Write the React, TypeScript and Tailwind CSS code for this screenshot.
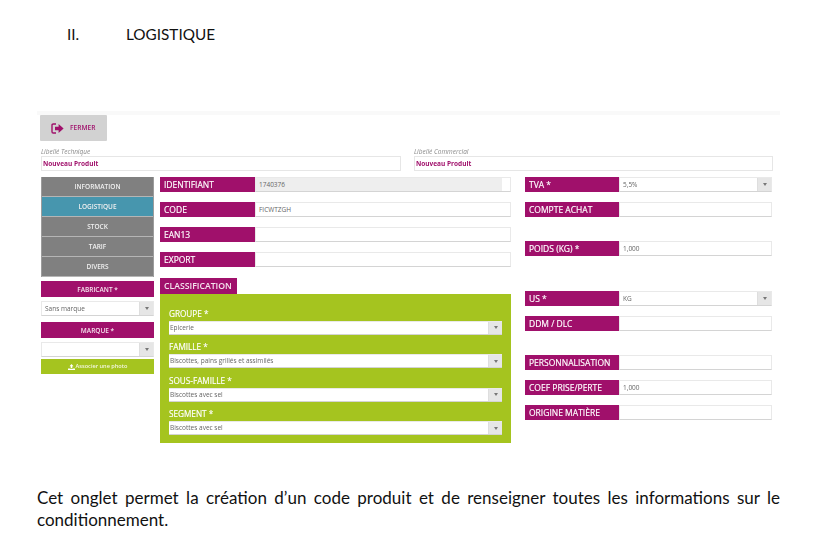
import React from "react";

const Arrow = () => (
  <div className="w-[14px] h-full border-l border-[#dedede] bg-[#e6e6e6] flex items-center justify-center shrink-0">
    <div className="w-0 h-0 border-l-[2.5px] border-r-[2.5px] border-t-[3px] border-l-transparent border-r-transparent border-t-[#777]" />
  </div>
);

const Field = ({ label, value, mt = "", grey = false, select = false, w = "w-[95px]" }: { label: string; value?: string; mt?: string; grey?: boolean; select?: boolean; w?: string }) => (
  <div className={`flex h-[15px] ${mt}`}>
    <div className={`${w} shrink-0 bg-[#a0106b] text-white text-[8.5px] font-normal [-webkit-text-stroke:0.15px_white] pl-[4px] pt-[2px] flex items-center`}>{label}</div>
    <div className="flex-1 flex items-center border border-[#e9e9e9] border-b-[#d4d4d4] bg-white text-[6.5px] text-[#666] relative">
      {grey ? <div className="absolute left-0 top-0 bottom-0 right-[8px] bg-[#eeeeee]" /> : null}
      <span className="relative flex-1 pl-[3px]">{value}</span>
      {select ? <Arrow /> : null}
    </div>
  </div>
);

const Tab = ({ label, active = false }: { label: string; active?: boolean }) => (
  <div className={`h-[20px] pt-[1px] flex items-center justify-center border-b border-[#b5b5b5] text-[#f0f0f0] text-[6.5px] font-semibold ${active ? "bg-[#4796ae]" : "bg-[#808080]"}`}>{label}</div>
);

const Bar = ({ label, mt = "" }: { label: string; mt?: string }) => (
  <div className={`h-[16px] pt-[1px] bg-[#a0106b] text-[#f4e4ee] text-[6.5px] font-semibold flex items-center justify-center ${mt}`}>{label}</div>
);

const Sel = ({ value, mt = "" }: { value: string; mt?: string }) => (
  <div className={`h-[15px] flex items-center bg-white border border-[#e9e9e9] border-b-[#d4d4d4] text-[6.5px] text-[#666] ${mt}`}>
    <span className="flex-1 pl-[3px]">{value}</span>
    <Arrow />
  </div>
);

const Group = ({ label, value }: { label: string; value: string }) => (
  <div className="h-[33.5px] flex flex-col justify-end">
    <div className="text-white text-[8.2px] font-normal [-webkit-text-stroke:0.15px_white] leading-[12px] mb-[1px]">{label}</div>
    <div className="h-[14px] flex items-center bg-white border-b border-t border-[#d4d4d4] border-t-[#e9e9e9] text-[6.5px] text-[#666]">
      <span className="flex-1 pl-[1px]">{value}</span>
      <Arrow />
    </div>
  </div>
);

export default function App() {
  return (
    <div className="w-[825px] h-[560px] bg-white overflow-hidden text-black" style={{ fontFamily: "Lato, sans-serif" }}>
      <div className="h-[111px] pt-[24px] pl-[67px] flex text-[15.3px] leading-[20px] text-[#111]">
        <span className="w-[59px]">II.</span>
        <span>LOGISTIQUE</span>
      </div>

      <div className="ml-[37px] w-[743px] h-[342px] blur-[0.35px]" style={{ fontFamily: '"Open Sans", sans-serif' }}>
        <div className="h-[4px] bg-[#f9f9f9]" />
        <div className="pl-[3px]">
          <div className="w-[67px] h-[26px] bg-[#d2d2d2] rounded-[1px] flex items-center pl-[11px] gap-[6px]">
            <svg width="13" height="11" viewBox="0 0 13 11" fill="none">
              <path d="M5 1H2.2C1.5 1 1 1.5 1 2.2v6.6C1 9.5 1.5 10 2.2 10H5" stroke="#a0106b" strokeWidth="1.4" />
              <path d="M4 3.8h3.6V1l5 4.5-5 4.5V7.2H4z" fill="#a0106b" />
            </svg>
            <span className="text-[6.6px] font-semibold text-[#a0106b]">FERMER</span>
          </div>
        </div>

        <div className="flex pl-[4px] pt-[6px] h-[36px]">
          <div className="w-[360px]">
            <div className="text-[6.5px] italic text-[#8a8a8a] leading-[9px]">Libellé Technique</div>
            <div className="h-[15px] border border-[#e6e6e6] flex items-center pl-[1px] text-[6.5px] font-bold text-[#a0106b]">Nouveau Produit</div>
          </div>
          <div className="w-[359px] ml-[13px]">
            <div className="text-[6.5px] italic text-[#8a8a8a] leading-[9px]">Libellé Commercial</div>
            <div className="h-[15px] border border-[#e6e6e6] flex items-center pl-[1px] text-[6.5px] font-bold text-[#a0106b]">Nouveau Produit</div>
          </div>
        </div>

        <div className="flex pl-[4px]">
          <div className="w-[113px]">
            <div className="border border-[#9c9c9c] border-y-0">
              <Tab label="INFORMATION" />
              <Tab label="LOGISTIQUE" active />
              <Tab label="STOCK" />
              <Tab label="TARIF" />
              <Tab label="DIVERS" />
            </div>
            <Bar label="FABRICANT *" mt="mt-[4px]" />
            <Sel value="Sans marque" mt="mt-[4px]" />
            <Bar label="MARQUE *" mt="mt-[6px]" />
            <Sel value="" mt="mt-[4px]" />
            <div className="mt-[2px] h-[15px] bg-[#a5c41f] text-[#f3f7e0] text-[5.6px] font-semibold flex items-center justify-center gap-[1px]">
              <svg width="7" height="6" viewBox="0 0 7 6" fill="#fff">
                <path d="M3.5 0 5.5 2.2H4.3V4H2.7V2.2H1.5zM0 4.4h2v.4h3v-.4h2V6H0z" />
              </svg>
              Associer une photo
            </div>
          </div>

          <div className="w-[351px] ml-[6px]">
            <Field label="IDENTIFIANT" value="1740376" grey />
            <Field label="CODE" value="FICWTZGH" mt="mt-[10px]" />
            <Field label="EAN13" mt="mt-[10px]" />
            <Field label="EXPORT" mt="mt-[10px]" />
            <div className="mt-[11px] w-[77px] h-[16px] pt-[1px] bg-[#a0106b] text-[#f4e4ee] text-[8.7px] font-semibold flex items-center pl-[4px]">CLASSIFICATION</div>
            <div className="h-[149px] bg-[#a5c41f] px-[9px] pt-[7px]">
              <Group label="GROUPE *" value="Epicerie" />
              <Group label="FAMILLE *" value="Biscottes, pains grillés et assimilés" />
              <Group label="SOUS-FAMILLE *" value="Biscottes avec sel" />
              <Group label="SEGMENT *" value="Biscottes avec sel" />
            </div>
          </div>

          <div className="w-[247px] ml-[14px]">
            <Field label="TVA *" value="5,5%" select w="w-[94px]" />
            <Field label="COMPTE ACHAT" mt="mt-[10px]" w="w-[94px]" />
            <Field label="POIDS (KG) *" value="1,000" mt="mt-[24px]" w="w-[94px]" />
            <Field label="US *" value="KG" select mt="mt-[35px]" w="w-[94px]" />
            <Field label="DDM / DLC" mt="mt-[10px]" w="w-[94px]" />
            <Field label="PERSONNALISATION" mt="mt-[24px]" w="w-[94px]" />
            <Field label="COEF PRISE/PERTE" value="1,000" mt="mt-[10px]" w="w-[94px]" />
            <Field label="ORIGINE MATIÈRE" mt="mt-[10px]" w="w-[94px]" />
          </div>
        </div>
      </div>

      <div className="ml-[37px] w-[743px] mt-[34px] text-[17px] leading-[22px] text-[#111]">
        <div className="text-justify [text-align-last:justify]">Cet onglet permet la création d’un code produit et de renseigner toutes les informations sur le</div>
        <div>conditionnement.</div>
      </div>
    </div>
  );
}
